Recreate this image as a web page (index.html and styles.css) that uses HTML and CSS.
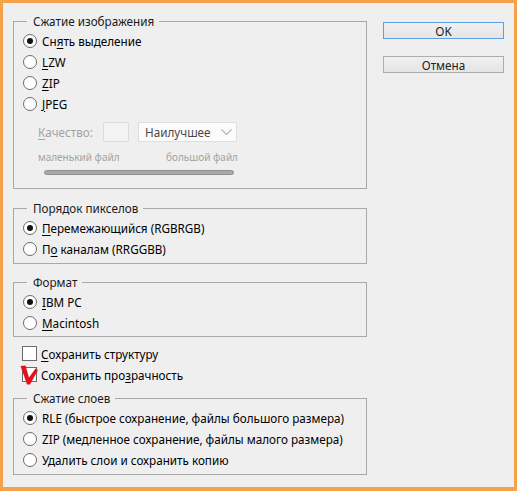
FILE: index.html
```html
<!DOCTYPE html>
<html lang="ru">
<head>
<meta charset="utf-8">
<title>Параметры TIFF</title>
<link rel="stylesheet" href="styles.css">
</head>
<body>
<div class="window">
  <div class="dialog">
    <div class="left">
      <fieldset class="group g1">
        <legend>Сжатие изображения</legend>
        <div class="opt"><span class="radio on"></span><span>Сн<u>я</u>ть выделение</span></div>
        <div class="opt"><span class="radio"></span><span><u>L</u>ZW</span></div>
        <div class="opt"><span class="radio"></span><span><u>Z</u>IP</span></div>
        <div class="opt"><span class="radio"></span><span><u>J</u>PEG</span></div>
        <div class="quality">
          <span class="qlabel"><u>К</u>ачество:</span>
          <span class="qbox"></span>
          <span class="select">
            <span class="sel-text">Наилучшее</span>
            <span class="sel-arrow"><svg width="11" height="7" viewBox="0 0 11 7"><path d="M0.5 0.5 L5.5 5.5 L10.5 0.5" fill="none" stroke="#b4b4b4" stroke-width="1.2"/></svg></span>
          </span>
        </div>
        <div class="sizes"><span>маленький файл</span><span>большой файл</span></div>
        <div class="slider"></div>
      </fieldset>

      <fieldset class="group g2">
        <legend>Порядок пикселов</legend>
        <div class="opt"><span class="radio on"></span><span><u>П</u>еремежающийся (RGBRGB)</span></div>
        <div class="opt"><span class="radio"></span><span>П<u>о</u> каналам (RRGGBB)</span></div>
      </fieldset>

      <fieldset class="group g3">
        <legend>Формат</legend>
        <div class="opt"><span class="radio on"></span><span><u>I</u>BM PC</span></div>
        <div class="opt"><span class="radio"></span><span><u>M</u>acintosh</span></div>
      </fieldset>

      <div class="checks">
        <div class="check"><span class="box"></span><span><u>С</u>охранить структуру</span></div>
        <div class="check"><span class="box marked"><svg class="mark" width="20" height="21" viewBox="0 0 20 21"><polygon points="0.5,1 5.5,0.5 9,12.5 15.5,3.5 18,5 10,19.5 7,19.5" fill="#e4121c"/></svg></span><span>Сохранить про<u>з</u>рачность</span></div>
      </div>

      <fieldset class="group g4">
        <legend>Сжатие слоев</legend>
        <div class="opt"><span class="radio on"></span><span>RLE (быстрое сохранение, файлы большого размера)</span></div>
        <div class="opt"><span class="radio"></span><span>ZIP (медленное сохранение, файлы малого размера)</span></div>
        <div class="opt"><span class="radio"></span><span>Удалить слои и сохранить копию</span></div>
      </fieldset>
    </div>

    <div class="right">
      <button class="btn default" type="button">OK</button>
      <button class="btn" type="button">Отмена</button>
    </div>
  </div>
</div>
</body>
</html>
```

FILE: styles.css
```css
html, body {
  margin: 0;
  padding: 0;
}

body {
  width: 517px;
  height: 491px;
  overflow: hidden;
  font-family: "Noto Sans", "Open Sans", "DejaVu Sans", sans-serif;
  font-size: 11.7px;
  color: #000;
}

.window {
  box-sizing: border-box;
  width: 517px;
  height: 491px;
  border: 3px solid #f6a24b;
  border-bottom-width: 4px;
  background: #efefef;
}

.dialog {
  display: flex;
  padding: 10px 0 0 10px;
}

.left {
  width: 354px;
  display: flex;
  flex-direction: column;
}

.group {
  margin: 0;
  padding: 1px 0 4px 9px;
  border: 1px solid #a8a8a8;
  min-width: 0;
}

.group legend {
  padding: 0 5px 0 6px;
  margin-left: 4px;
  line-height: 16px;
  height: 16px;
  color: #1a1a1a;
}

.g1 { padding-bottom: 13px; }
.g2 { margin-top: 11px; }
.g3 { margin-top: 10px; padding-bottom: 3px; }
.g4 { margin-top: 5px; }

.opt {
  display: flex;
  align-items: center;
  height: 21px;
  line-height: 16px;
}

.radio {
  box-sizing: border-box;
  width: 14px;
  height: 14px;
  border: 1px solid #6b6b6b;
  border-radius: 50%;
  background: #fff;
  margin-right: 5px;
  display: flex;
  align-items: center;
  justify-content: center;
  flex: none;
}

.radio.on::after {
  content: "";
  width: 6px;
  height: 6px;
  border-radius: 50%;
  background: #111;
}

u {
  text-decoration: underline;
  text-underline-offset: 2px;
}

.quality {
  display: flex;
  align-items: center;
  height: 20px;
  margin-top: 8px;
  padding-left: 15px;
  color: #a3a3a3;
}

.qlabel {
  width: 65px;
  line-height: 16px;
}

.qbox {
  box-sizing: border-box;
  width: 26px;
  height: 20px;
  border: 1px solid #dcdcdc;
  background: #f3f3f3;
  margin-right: 9px;
}

.select {
  box-sizing: border-box;
  width: 99px;
  height: 20px;
  border: 1px solid #dedede;
  background: #fbfbfb;
  display: flex;
  align-items: center;
}

.sel-text {
  flex: 1;
  padding-left: 6px;
  color: #4a4a4a;
  line-height: 16px;
}

.sel-arrow {
  width: 20px;
  height: 18px;
  display: flex;
  align-items: center;
  justify-content: center;
}

.sizes {
  display: flex;
  justify-content: space-between;
  width: 200px;
  margin-top: 7px;
  margin-left: 15px;
  line-height: 16px;
  height: 16px;
  font-size: 10px;
  color: #a3a3a3;
}

.slider {
  box-sizing: border-box;
  width: 190px;
  height: 5px;
  margin-top: 5px;
  margin-left: 21px;
  border: 1px solid #8f8f8f;
  border-radius: 3px;
  background: #a9a9a9;
}

.checks {
  margin-top: 6px;
  padding-left: 9px;
}

.check {
  display: flex;
  align-items: center;
  height: 21px;
  line-height: 16px;
}

.box {
  box-sizing: border-box;
  width: 15px;
  height: 15px;
  border: 1px solid #6b6b6b;
  background: #fff;
  margin-right: 4px;
  flex: none;
  position: relative;
}

.mark {
  position: absolute;
  left: -3px;
  top: -3px;
}

.right {
  display: flex;
  flex-direction: column;
  gap: 17px;
  margin-left: 16px;
  margin-top: 9px;
}

.btn {
  box-sizing: border-box;
  width: 121px;
  height: 17px;
  padding: 0;
  font-family: inherit;
  font-size: 11.7px;
  font-weight: 400;
  line-height: 14px;
  color: #222;
  border: 1px solid #adadad;
  background: linear-gradient(#f0f0f0, #e5e5e5);
  border-radius: 0;
}

.btn.default {
  border-color: #5c9fe3;
}
```
